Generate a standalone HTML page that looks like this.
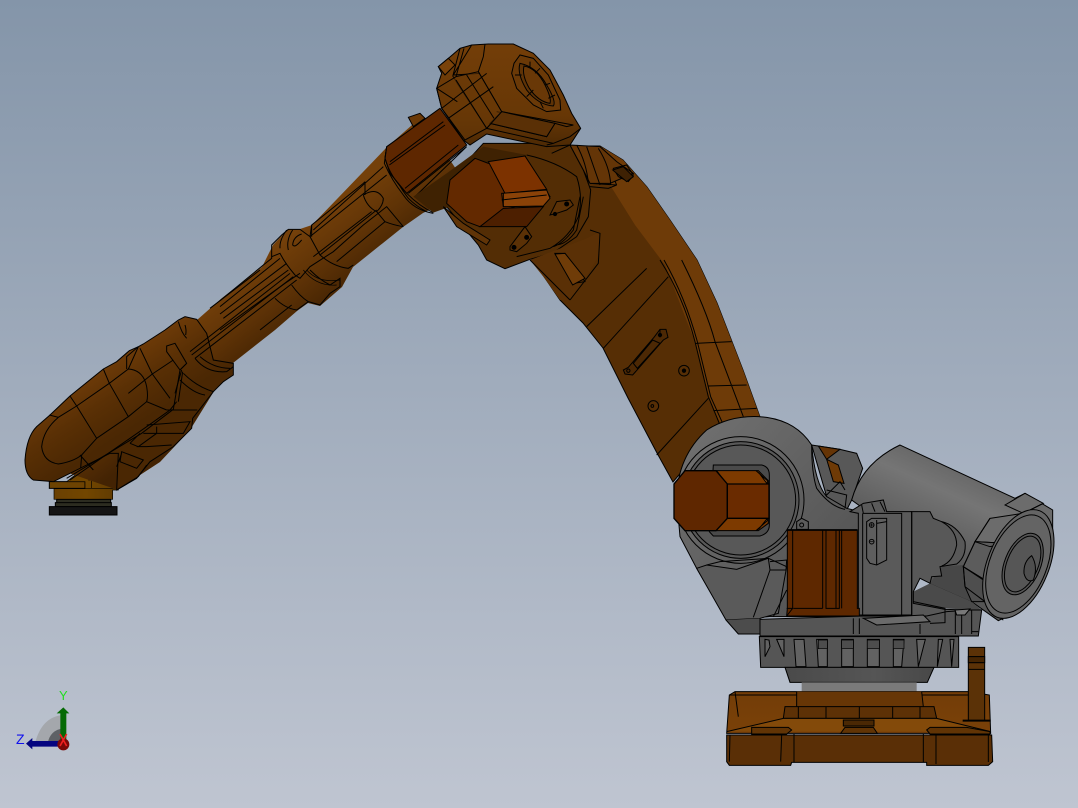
<!DOCTYPE html>
<html><head><meta charset="utf-8"><title>Robot arm CAD view</title>
<style>html,body{margin:0;padding:0;width:1078px;height:808px;overflow:hidden;background:#a3aebe}svg{display:block}
.l{fill:none}</style></head><body>
<svg width="1078" height="808" viewBox="0 0 1078 808" xmlns="http://www.w3.org/2000/svg">
<defs>
<linearGradient id="bg" x1="0" y1="0" x2="0" y2="1"><stop offset="0" stop-color="#8495a9"/><stop offset="1" stop-color="#bfc5d1"/></linearGradient>
<linearGradient id="tube" gradientUnits="userSpaceOnUse" x1="290" y1="235" x2="340" y2="300"><stop offset="0" stop-color="#74400a"/><stop offset=".5" stop-color="#5f3306"/><stop offset="1" stop-color="#432303"/></linearGradient>
<linearGradient id="tip" gradientUnits="userSpaceOnUse" x1="230" y1="470" x2="340" y2="640"><stop offset="0" stop-color="#6e3b08"/><stop offset=".45" stop-color="#5a3005"/><stop offset="1" stop-color="#4a2703"/></linearGradient>
<linearGradient id="cyl" gradientUnits="userSpaceOnUse" x1="840" y1="180" x2="730" y2="420"><stop offset="0" stop-color="#6a6a6a"/><stop offset=".25" stop-color="#757575"/><stop offset="1" stop-color="#555"/></linearGradient>
<linearGradient id="hub" x1="0" y1="0" x2="1" y2="1"><stop offset="0" stop-color="#727272"/><stop offset="1" stop-color="#4e4e4e"/></linearGradient>
<linearGradient id="cone" x1="0" y1="0" x2="1" y2="0"><stop offset="0" stop-color="#4a4a4a"/><stop offset=".6" stop-color="#555"/><stop offset="1" stop-color="#484848"/></linearGradient>
<linearGradient id="head" x1="0" y1="0" x2="0" y2="1"><stop offset="0" stop-color="#733e08"/><stop offset=".7" stop-color="#673706"/><stop offset="1" stop-color="#4c2904"/></linearGradient>
<linearGradient id="gold" x1="0" y1="0" x2="1" y2="0"><stop offset="0" stop-color="#6a4002"/><stop offset=".5" stop-color="#724600"/><stop offset="1" stop-color="#5f3a02"/></linearGradient>
<linearGradient id="plat" x1="0" y1="0" x2="0" y2="1"><stop offset="0" stop-color="#733d08"/><stop offset="1" stop-color="#7a4108"/></linearGradient>
</defs>
<rect width="1078" height="808" fill="url(#bg)"/>

<!-- flange under tip -->
<g transform="translate(10 220) scale(.33333)" stroke="#000" stroke-width="3">
<path d="M118 785H225V805H118Z" fill="#6d4302"/>
<path d="M240 730L300 700L325 700V810H308V838H132V806H225V785H170Z" fill="url(#gold)" stroke-width="2"/>
<path d="M240 765H325M235 780H325M225 805H325M245 740V805" fill="none" stroke-width="2"/>
<path d="M140 838H302V848H140ZM136 848H304V860H136Z" fill="#2c2c20"/>
<path d="M118 860H321V885H118Z" fill="#151515"/>
</g>

<!-- forearm tube -->
<path d="M197 320L222 298L262 267L273 245L288 229L300 229L312 225L387 147L420 118L450 160L470 190L423 213L403 227L353 267L342 287L320 306L308 303L297 311L275 330L233 363L233 374L216 388L190 430L160 462L120 488L115 489L60 470Z" fill="url(#tube)"/>

<!-- forearm lines D -->
<g transform="translate(220 130) scale(.33333)" stroke="#000" stroke-width="3" fill="none">
<path d="M0 512L130 405L155 385V345L185 315L205 298H240L270 320L275 285L430 160L435 155"/>
<path d="M200 300Q178 330 180 355M218 300Q198 330 205 360M245 312Q220 320 218 345Q225 355 245 330" />
<path d="M155 380L180 370Q195 400 225 435L240 445L270 410L340 365L430 285L500 230L550 290"/>
<path d="M0 600L195 460L240 430M270 420Q300 450 330 465L360 445V470L330 490L300 525L265 515Q240 500 215 465"/>
<path d="M250 420Q290 470 350 465M260 420Q295 460 360 450" stroke-width="2"/>
<path d="M165 505Q195 535 230 540L265 515"/>
<path d="M0 530L180 385M0 552L200 400M10 565L205 420M120 600L215 525"/>
<path d="M270 320L300 375Q340 410 385 415L400 405M350 395L495 275M300 375L470 240M280 380L455 245"/>
<path d="M430 195Q470 170 490 205Q490 225 470 245M430 195Q440 230 470 245M470 245L495 275Q520 285 550 290"/>
<path d="M435 155V195M275 285V320M270 320L500 135M280 300L490 110"/>
<path d="M500 50L493 100Q515 150 550 195Q580 240 640 250M510 85L640 0M500 60L560 10M505 100Q530 160 565 205Q590 230 620 245"/>
</g>

<!-- forearm tip C -->
<g transform="translate(10 220) scale(.33333)" stroke="#000" stroke-width="3">
<path d="M45 720Q50 650 80 620L120 585L180 528L280 447L320 425L358 392L385 380L400 372L465 330L505 300L525 290L560 298L590 340L610 420L670 430V465L640 485L610 515L548 595L545 625L490 680L420 725L380 775L320 810L325 700L300 700L130 785L70 780Q45 765 45 720Z" fill="url(#tip)"/>
<g fill="none">
<path d="M118 585L145 592L200 558L298 490L355 447L385 380M180 528L200 558L260 655L355 590L410 545L470 570M280 447L298 490L355 590"/>
<path d="M145 592Q100 630 95 680Q100 725 145 732Q190 725 215 705L260 655"/>
<path d="M355 447Q400 450 410 500Q415 530 410 545M350 447L350 410L385 380M390 385L427 462L355 520M427 462L490 420M427 462L480 535"/>
<path d="M210 705L250 750M215 705L212 745M170 775L395 640L490 568L510 450L530 430"/>
<path d="M180 780L410 620L480 570L500 545M495 520L515 450M505 545L518 455"/>
<path d="M520 460Q560 500 610 515M510 480Q550 520 585 525M555 415Q590 460 650 455L670 440M570 410Q610 445 660 445"/>
<path d="M470 378L495 370L530 430L510 450L470 395Z"/>
<path d="M470 570H562M410 615L540 605L520 640L470 640H400M360 670L385 680L440 640V620M360 670L390 640M380 680H410L485 675"/>
<path d="M335 695L400 720L380 745L330 725ZM320 740L335 700M320 810L385 770L410 735"/>
<path d="M505 305Q515 340 530 355M525 315Q530 330 527 345"/>
<path d="M545 405L850 170M555 415L860 180M540 395L840 160M600 265L750 150"/>
</g>
</g>

<!-- upper arm -->
<path d="M570 146L600 146L623 160L647 187L670 220L697 260L717 303L743 370L760 417L700 450L673 482L657 453L628 398L603 348L583 323L560 300L530 256L540 200Z" fill="#562e05" stroke="#000"/>
<path d="M590 147L600 146L623 160L647 187L670 220L697 260L717 303L743 370L760 417L722 428L708 397L695 342L665 265L635 225L610 185Z" fill="#6e3b08"/>
<g transform="translate(560 260) scale(.33333)" stroke="#000" stroke-width="3" fill="none">
<path d="M300 0Q370 110 405 245L445 410L480 495M312 0Q375 110 412 245L452 410L488 490M365 0Q440 150 465 245L550 470M405 250L515 245M445 378L560 375M460 452L590 445"/>
<path d="M80 200L260 25M130 265L325 50M290 585L445 415"/>
<path d="M205 322L282 232L300 208H318L324 232L310 240L218 345L195 342L190 330ZM220 310L278 240L300 250L232 325ZM300 208V232" fill="#4c2804"/>
<circle cx="300" cy="225" r="5" fill="#000"/><circle cx="205" cy="332" r="5"/>
<circle cx="372" cy="332" r="16"/><circle cx="372" cy="332" r="5" fill="#000"/>
<circle cx="280" cy="438" r="16"/><circle cx="277" cy="438" r="4"/>
</g>

<!-- elbow & head B -->
<g transform="translate(370 30) scale(.33333)" stroke="#000" stroke-width="3">
<path d="M230 530L325 645L350 690L405 716L480 688L550 668L620 620L655 560L662 480L640 420L600 345L540 340L340 340L240 450Z" fill="#532d05"/>
<path d="M660 460L740 465L715 475L660 470M690 350L740 465" fill="none"/>
<path d="M600 345L690 350L740 395L790 430L720 460L660 460L640 420Z" fill="#643507"/>
<path d="M650 350L690 465M685 355Q720 410 722 465M730 415L770 405L790 435L775 455L745 440Z" fill="none"/>
<path d="M728 420L760 410L790 440L770 455Z" fill="#3e2103"/>
<path d="M480 690L650 625L690 605V670L650 740L600 810L570 810L520 740Z" fill="#5a3006" stroke="none"/>
<path d="M480 690L600 810M660 600L690 610L685 700L600 810M555 670L610 760L645 755L585 670Z" fill="none"/>
<path d="M555 672L585 670L645 745L608 765Z" fill="#6f3c08"/>
<path d="M470 375Q560 395 620 440Q640 500 625 560Q600 620 540 655L440 680M630 500L610 600Q580 640 550 650M640 500L620 600Q590 645 555 645" fill="none"/>
<path d="M545 370L600 345M620 345Q650 400 655 460" fill="none"/>
<path d="M50 350L210 235L290 345L110 490L60 430L45 385Z" fill="#5e2700"/>
<path d="M50 350L45 385Q60 440 110 490Q150 530 190 548M60 395L220 275M58 405L225 285M105 475L265 345M115 490L290 350L135 500" fill="none"/>
<path d="M115 262L150 250L165 265L130 290Z" fill="#6a3907"/>
<path d="M130 500L230 430L340 350L470 375L240 530L190 548Z" fill="#3f2202" stroke="none"/>
<path d="M240 450L315 385L355 400L465 378L540 500L400 540L330 590L290 575L230 520Z" fill="#632900"/>
<path d="M355 395L465 378L530 478L405 490Z" fill="#7c3200"/>
<path d="M395 490L530 480L540 505L520 528L400 530Z" fill="#8a4208"/>
<path d="M330 590L400 535L520 530L470 590Z" fill="#4d1f00"/>
<path d="M395 510L530 495M400 530V490" fill="none"/>
<path d="M220 530L280 580L360 630L350 645L260 590Z" fill="#603407"/>
<path d="M420 650L465 590L485 620L470 640L440 665L420 660Z M560 515L600 510L610 525L590 540L560 550L540 555Z" fill="#5b3106"/>
<circle cx="432" cy="652" r="6"/><circle cx="470" cy="622" r="6"/><circle cx="555" cy="552" r="5"/><circle cx="590" cy="522" r="6"/>
<path d="M200 175L215 130L205 110L235 85L270 55L305 45L355 42L430 42L490 70L540 120L580 195L605 250L632 295L600 345L530 350L350 312L300 345L280 330L215 235Z" fill="url(#head)"/>
<path d="M345 42L340 80Q330 110 325 125L395 245L350 295L265 165L250 140M305 45L250 135L330 130M270 55L248 140M282 55L258 140" fill="none"/>
<path d="M395 245L610 285L590 290L555 280L380 245M350 295L550 340L600 320L632 295M360 280L530 320L555 280M550 340L530 345" fill="none"/>
<path d="M395 245L555 280L530 320L360 280Z" fill="#5a3006"/>
<path d="M258 140L325 125L395 245L350 295L285 330L215 235L200 175Z" fill="#683807" fill-opacity=".55"/>
<path d="M215 235L350 130M235 265L370 170M258 150L350 295M290 135L372 265M200 175L262 215" fill="none"/>
<path d="M205 110L235 85L255 105L225 135Z" fill="#7a4209"/>
<path d="M432 100L450 75L490 85L535 135L570 210L572 240L530 245L490 225L440 175L425 130Z" fill="#6a3907"/>
<path d="M450 100Q500 110 530 165Q560 215 550 228Q505 225 470 180Q440 130 450 100Z" fill="#5f3306"/>
<path d="M462 108Q500 115 525 165Q545 205 540 220Q505 215 478 175Q455 135 462 108Z" fill="#693807"/>
<path d="M480 95V112M510 115L495 130M540 160L525 165M555 195L535 205M520 235L510 215M470 200L490 180M435 135L455 135" fill="none"/>
</g>

<!-- base + gray A -->
<g transform="translate(670 410) scale(.33333)" stroke="#000" stroke-width="3">
<!-- far hub behind -->
<path d="M425 105L510 118L560 130L578 175L545 270L530 300L470 260Z" fill="#585858"/>
<path d="M445 108L510 118L470 148Z" fill="#653406"/>
<path d="M470 148L505 165L522 220L490 215Z" fill="#6e3a06"/>
<!-- motor cylinder -->
<path d="M545 270Q575 160 690 105L1035 265L1065 250L1148 300V395L1120 500L1050 600L985 632L905 575L780 520L725 400Z" fill="url(#cyl)"/>
<path d="M730 545L780 520L905 575L935 600L730 592Z" fill="#4a4a4a" stroke="none"/>
<path d="M780 520L815 470L880 465L885 530L905 575Z" fill="#474747" stroke="none"/>
<path d="M1005 285L1065 250L1120 280L1060 310ZM960 325L1060 310L1010 400L915 395Z" fill="#6c6c6c"/>
<path d="M915 395L1010 400L945 510L880 470Z" fill="#5c5c5c"/>
<path d="M880 470L945 510L945 575L905 575L885 530Z" fill="#4e4e4e"/>
<path d="M960 325L915 395L880 470L885 530L945 575Q980 620 1000 630M880 470L940 510M1060 310L1120 280M915 395L960 410L1010 400" fill="none"/>
<ellipse cx="1045" cy="462" rx="92" ry="172" transform="rotate(22 1045 462)" fill="#646464"/>
<ellipse cx="1045" cy="462" rx="85" ry="155" transform="rotate(22 1045 462)" fill="none"/>
<ellipse cx="1058" cy="462" rx="54" ry="97" transform="rotate(22 1058 462)" fill="#565656"/>
<ellipse cx="1058" cy="462" rx="47" ry="88" transform="rotate(22 1058 462)" fill="none"/>
<path d="M1085 437Q1060 455 1062 490Q1070 520 1090 510Q1105 470 1085 437Z" fill="#4e4e4e"/>
<!-- coupling -->
<path d="M725 305H780L790 325L815 335Q860 345 885 395Q890 440 860 462L810 470L815 498L785 500L780 520L750 505L730 545V580L825 598L905 600L935 600L925 640L725 620Z" fill="#585858"/>
<path d="M815 335Q860 360 860 405Q850 455 815 468" fill="none"/>
<!-- shoulder hub -->
<path d="M20 265Q22 140 110 60Q190 10 290 22Q380 35 425 105Q435 220 470 260L530 295L570 305L570 560L580 620H300L170 630L80 475L30 380Z" fill="url(#hub)"/>
<path d="M425 105Q425 190 440 235Q480 290 525 298M470 240L530 255L525 295M470 255L510 215L525 240" fill="none"/>
<circle cx="212" cy="270" r="175" fill="#585858"/>
<circle cx="212" cy="270" r="190" fill="none"/>
<circle cx="212" cy="270" r="165" fill="none"/>
<path d="M130 165H275Q298 170 298 195V345Q298 370 270 378H130L118 365Z" fill="#4a4a4a"/>
<!-- red insert -->
<path d="M140 182H265L295 212V222H170ZM138 362L170 325H295V340L265 362Z" fill="#7d3a00"/>
<path d="M258 182L292 212V222L268 190ZM258 362L292 332V325L268 355Z" fill="#a36020"/>
<path d="M45 182H138L172 222V325L138 362H45L12 325V222Z" fill="#5f2700" stroke-width="4"/>
<path d="M172 222H297V325H172Z" fill="#6a2b00" stroke-width="4"/>
<!-- lower shoulder -->
<path d="M80 475L110 465L200 478L295 445L350 470L325 610L270 625L168 630Z" fill="#5a5a5a"/>
<path d="M110 465L150 455L295 445L300 480L250 622M300 455L350 450L348 480L300 480M350 540L310 620" fill="none"/>
<path d="M168 630L205 672H270V625" fill="#4c4c4c"/>
<!-- central block -->
<path d="M540 305L580 280L640 270L650 305H725V615H565V310Z" fill="#5a5a5a"/>
<path d="M575 285L580 310H695V615M605 280L615 305M630 275L645 305M578 310V615M725 305V615" fill="none"/>
<path d="M590 335L605 325H650V450L620 465L600 460L590 445Z" fill="#5e5e5e"/>
<path d="M620 330V465M650 335L620 340" fill="none"/>
<circle cx="605" cy="345" r="7" fill="none"/><circle cx="605" cy="395" r="7" fill="none"/>
<path d="M605 340V350M600 345H610M600 395H610" fill="none" stroke-width="2"/>
<!-- brown panel -->
<path d="M352 360H562L562 595H568V618H350L352 595Z" fill="#5e2800"/>
<path d="M352 360H562" fill="none" stroke-width="5"/>
<path d="M458 360V595M468 360V595H508V360M498 360V595M515 360V595M368 360V595L350 618M350 595H368M370 595H458" fill="none"/>
<path d="M380 335L395 325L415 335L415 358H380Z" fill="#5c5c5c"/>
<circle cx="395" cy="345" r="6" fill="none"/>
<!-- base deck -->
<path d="M270 628L580 618H770L830 605L905 600L935 600L925 678H270Z" fill="#555"/>
<path d="M580 625L620 645L780 635L760 615Z" fill="#6a6a6a"/>
<path d="M730 575L825 595V638L780 640M550 625V672M568 625V672M750 642V672M856 605V672M875 615V672M905 600V672M925 665H905" fill="none"/>
<path d="M855 600L900 597L885 615H860Z" fill="#787878"/>
<!-- ring -->
<path d="M268 680H866V772H272Z" fill="#555"/>
<path d="M297 690L300 710L285 740V688ZM320 688H342V740ZM372 688H402L408 770H378ZM440 688H472V770H445ZM515 688H550V770H515ZM592 688H628V770H592ZM670 688H702L695 770H670ZM740 688H766L745 770ZM805 688H818L802 770ZM840 688H852L845 770Z" fill="#626262"/>
<path d="M515 690H550V716H515ZM592 690H628V716H592ZM445 690H472V716H445ZM670 690H702V716H670Z" fill="#4d4d4d" stroke-width="2"/>
<!-- cone + neck -->
<path d="M345 772H792L772 817H360Z" fill="url(#cone)"/>
<path d="M395 817H740V845H395Z" fill="#7a7a7a" stroke="none"/>
<!-- platform -->
<path d="M178 855L195 845H900L958 855L962 970H170Z" fill="url(#plat)"/>
<path d="M380 845H755L760 890H378Z" fill="#673606" stroke="none"/>
<path d="M340 925L345 890H792L800 925Z" fill="#5d3106"/>
<path d="M178 855H380M195 845L205 920M755 855H895M385 890V925M468 890V925M568 890V925M668 890V925M750 890V925M380 845V890M755 845L760 890" fill="none"/>
<path d="M170 965L340 925H800L962 965" fill="#834a0a"/>
<path d="M170 975H965L968 1055L955 1066H770V1057H365L362 1066H178L170 1055Z" fill="#5a2f06"/>
<path d="M245 952H355L365 960L350 972H245ZM780 952H890L960 965V972H780L770 960ZM525 952H610L622 970H512Z" fill="#613405"/>
<path d="M520 930H612V948H520Z" fill="#4a2804"/>
<path d="M335 975L332 1055M372 972V1056M760 972V1056M798 972V1062M180 975L178 1055M955 975V1056" fill="none"/>
<path d="M895 712H944V932H895Z" fill="#5b3207"/>
<path d="M895 740H944M895 758H944M895 778H944" fill="none"/>
<path d="M895 740H944V758H895Z" fill="#452503"/>
<path d="M878 932H962" fill="none" stroke-width="6"/>
</g>

<!-- triad -->
<g transform="translate(5 680) scale(.33333)">
<path d="M175 190V105Q110 110 90 190Z" fill="#a4a7ac"/>
<path d="M175 190V145Q135 150 128 190Z" fill="#5e6166"/>
<path d="M166 190V100H155L175 82L193 100H184V190Z" fill="#056a05"/>
<path d="M175 183H82V174L63 191L82 208V200H175Z" fill="#050580"/>
<circle cx="175" cy="193" r="18" fill="#7a0808"/>
<path d="M165 162L185 198M185 162L165 198" stroke="#f02020" stroke-width="5" fill="none"/>
</g>
<text x="59" y="700" font-family="Liberation Sans, sans-serif" font-size="13" fill="#22dd22">Y</text>
<text x="16" y="744" font-family="Liberation Sans, sans-serif" font-size="14" fill="#1010ee">Z</text>
</svg>
</body></html>
